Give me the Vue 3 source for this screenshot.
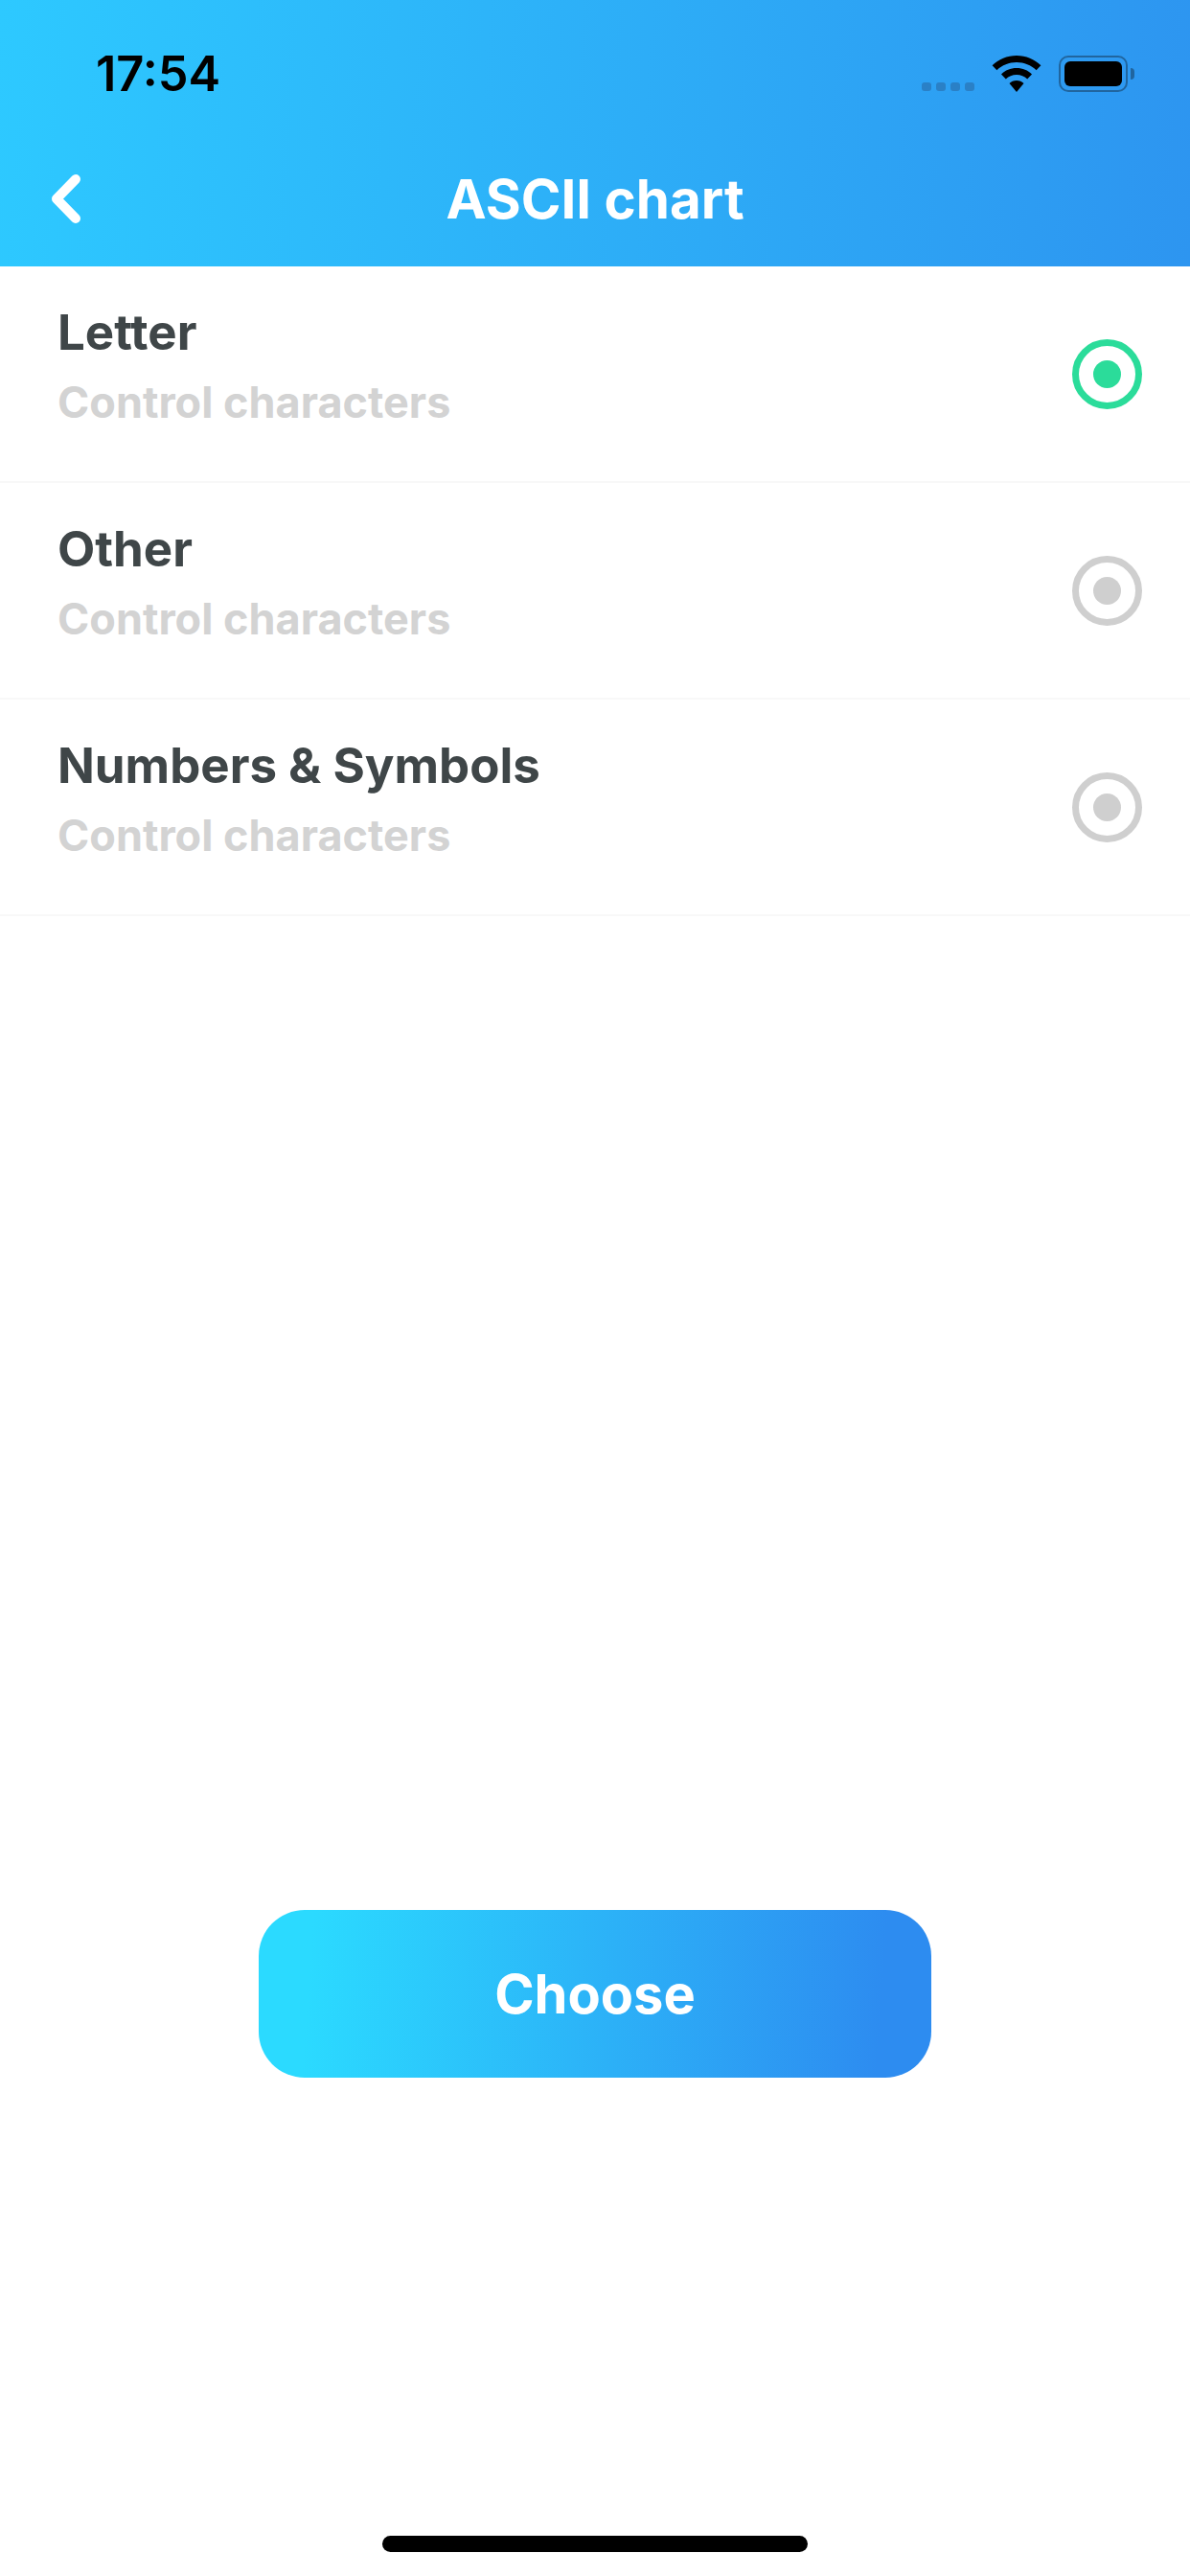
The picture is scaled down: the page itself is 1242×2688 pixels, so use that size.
<script setup>
const rows = [
  { title: 'Letter', sub: 'Control characters', active: true },
  { title: 'Other', sub: 'Control characters', active: false },
  { title: 'Numbers & Symbols', sub: 'Control characters', active: false }
]
</script>

<template>
  <div class="page">
    <header class="head">
      <div class="status">
        <span class="time">17:54</span>
        <div class="status-icons">
          <div class="dots"><i></i><i></i><i></i><i></i></div>
          <svg class="wifi" width="52" height="38" viewBox="0 0 52 38">
            <path d="M26 0C16 0 7.400 3.800 .6 10.200L5.400 15.200C11 10 18 7 26 7s15 3 20.600 8.200l4.800-5C44.600 3.800 36 0 26 0z" fill="#000"/>
            <path d="M26 13c-6.400 0-11.800 2.400-16 6.400l4.800 5C17.800 21.600 21.600 20 26 20s8.200 1.600 11.200 4.400l4.800-5C37.800 15.400 32.400 13 26 13z" fill="#000"/>
            <path d="M26 26c-3 0-5.600 1.100-7.500 2.900L26 38l7.500-9.100C31.600 27.100 29 26 26 26z" fill="#000"/>
          </svg>
          <div class="battery"><div class="level"></div></div>
          <div class="nub"></div>
        </div>
      </div>
      <div class="nav">
        <svg class="back" width="30" height="51" viewBox="0 0 30 51">
          <path d="M25 5 5 25.500 25 46" fill="none" stroke="#fff" stroke-width="10" stroke-linecap="round" stroke-linejoin="round"/>
        </svg>
        <h1 class="title">ASCII chart</h1>
      </div>
    </header>

    <ul class="list">
      <li v-for="row in rows" :key="row.title" class="row">
        <div class="text">
          <div class="name">{{ row.title }}</div>
          <div class="sub">{{ row.sub }}</div>
        </div>
        <div class="radio" :class="{ on: row.active }"><span class="dot"></span></div>
      </li>
    </ul>

    <button class="choose" type="button">Choose</button>
    <div class="home"></div>
  </div>
</template>

<style>
html, body { margin: 0; padding: 0; background: #fff; }
</style>

<style scoped>
.page {
  width: 1242px;
  height: 2688px;
  display: flex;
  flex-direction: column;
  background: #fff;
  font-family: Inter, "Liberation Sans", sans-serif;
  overflow: hidden;
}
.head {
  flex: none;
  height: 278px;
  box-sizing: border-box;
  padding-top: 50px;
  background: linear-gradient(94deg, #2dc9ff 0%, #2d95f0 100%);
}
.status {
  height: 54px;
  display: flex;
  align-items: center;
  justify-content: space-between;
  padding: 0 58px 0 100px;
}
.time {
  font-size: 50.5px;
  font-weight: 600;
  color: #000;
  line-height: 54px;
}
.status-icons {
  display: flex;
  align-items: flex-start;
  height: 45px;
  padding-top: 7px;
}
.dots {
  display: flex;
  gap: 5px;
  margin-top: 28px;
  margin-right: 18px;
}
.dots i {
  display: block;
  width: 10px;
  height: 9px;
  border-radius: 3px;
  background: #2a80c6;
}
.wifi { margin-right: 18px; }
.battery {
  width: 72px;
  height: 38px;
  box-sizing: border-box;
  padding: 4px;
  border: 2px solid #20659f;
  border-radius: 10px;
}
.level {
  width: 100%;
  height: 100%;
  background: #000;
  border-radius: 6px;
}
.nub {
  width: 4px;
  height: 12px;
  margin: 13px 0 0 3px;
  border-radius: 0 6px 6px 0;
  background: #20659f;
}
.nav {
  position: relative;
  display: flex;
  justify-content: center;
  align-items: center;
  height: 70px;
  margin-top: 69px;
}
.back {
  position: absolute;
  left: 54px;
  top: 9px;
}
.title {
  margin: 0;
  font-size: 56.500px;
  font-weight: 700;
  color: #fff;
  line-height: 70px;
}
.list {
  list-style: none;
  margin: 0;
  padding: 0;
  flex: none;
}
.row {
  height: 226px;
  box-sizing: border-box;
  padding: 0 50px 0 60px;
  border-bottom: 2px solid #f8f8f8;
  display: flex;
  justify-content: space-between;
  align-items: center;
}
.text { margin-top: -16px; }
.name {
  font-size: 51px;
  font-weight: 700;
  color: #3f4648;
  line-height: 66px;
}
.sub {
  margin-top: 10px;
  font-size: 45px;
  font-weight: 700;
  color: #d3d3d3;
  line-height: 60px;
}
.radio {
  width: 73px;
  height: 73px;
  box-sizing: border-box;
  border: 7px solid #cfcfcf;
  border-radius: 50%;
  display: flex;
  align-items: center;
  justify-content: center;
}
.dot {
  width: 29px;
  height: 29px;
  border-radius: 50%;
  background: #cfcfcf;
}
.radio.on { border-color: #2bdc9a; }
.radio.on .dot { background: #2bdc9a; }
.choose {
  display: block;
  width: 702px;
  height: 175px;
  margin: 1037px 0 0 270px;
  flex: none;
  border: 0;
  padding: 0;
  border-radius: 48px;
  background: linear-gradient(94deg, #2bdaff 8%, #2d8cf0 92%);
  color: #fff;
  font-family: inherit;
  font-size: 56px;
  font-weight: 700;
}
.home {
  width: 444px;
  height: 17px;
  margin: 478px 0 0 399px;
  flex: none;
  border-radius: 9px;
  background: #000;
}
</style>
